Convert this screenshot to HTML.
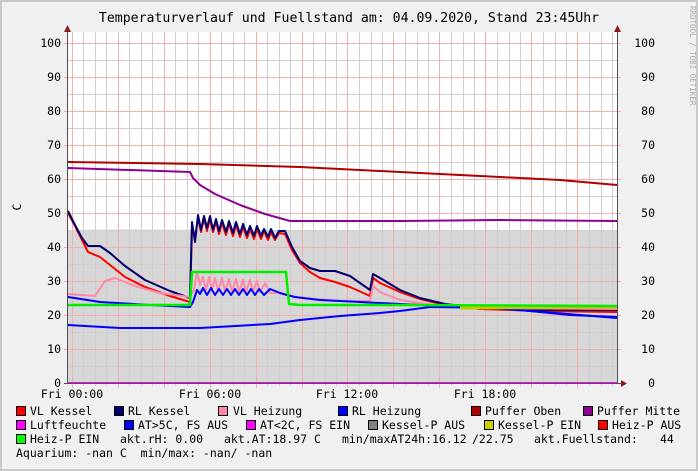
<!DOCTYPE html><html><head><style>body{margin:0;background:#f0f0f0}svg{display:block}</style></head><body>
<svg width="698" height="471" xmlns="http://www.w3.org/2000/svg" font-family="DejaVu Sans Mono, Liberation Mono, monospace">
<rect x="0" y="0" width="698" height="471" fill="#f0f0f0"/>
<rect x="1" y="1" width="696" height="469" fill="none" stroke="#c8c8c8" stroke-width="2"/>
<rect x="68" y="32" width="549" height="351" fill="#fff"/>
<!-- gray fill area -->
<path d="M68,230 L120,229.5 L200,230 L300,230 L400,230.5 L500,230 L617,231 L617,383 L68,383Z" fill="#d7d7d7"/>
<!-- grid -->
<g stroke="#cfcfcf" stroke-width="1">
<path d="M68,366.5H617M68,332.5H617M68,298.5H617M68,264.5H617M68,230.5H617M68,196.5H617M68,162.5H617M68,128.5H617M68,94.5H617M68,60.5H617"/>
<path id="vg" d="M83.5,32V386M95.5,32V386M106.5,32V386M129.5,32V386M141.5,32V386M152.5,32V386M175.5,32V386M187.5,32V386M198.5,32V386M221.5,32V386M233.5,32V386M244.5,32V386M267.5,32V386M279.5,32V386M290.5,32V386M313.5,32V386M325.5,32V386M336.5,32V386M359.5,32V386M371.5,32V386M382.5,32V386M405.5,32V386M417.5,32V386M428.5,32V386M451.5,32V386M463.5,32V386M474.5,32V386M497.5,32V386M509.5,32V386M520.5,32V386M543.5,32V386M555.5,32V386M566.5,32V386M589.5,32V386M601.5,32V386M612.5,32V386"/>
</g>
<g stroke="#f0b0b0" stroke-width="1">
<path d="M64,349.5H621M64,315.5H621M64,281.5H621M64,247.5H621M64,213.5H621M64,179.5H621M64,145.5H621M64,111.5H621M64,77.5H621M64,43.5H621"/>
<path d="M72.5,32V388M118.5,32V388M164.5,32V388M210.5,32V388M256.5,32V388M302.5,32V388M347.5,32V388M393.5,32V388M439.5,32V388M485.5,32V388M531.5,32V388M577.5,32V388"/>
</g>
<!-- series -->
<g fill="none" stroke-linejoin="round" stroke-width="2">
<path d="M68,162 L200,164 L300,167 L400,172 L500,177 L560,180 L617,185" stroke="#b00000"/>
<path d="M68,168 L190,172 L193,178 L200,185 L215,194 L240,205 L265,214 L290,221 L400,221 L500,220 L617,221" stroke="#900090"/>
<path d="M68,213 L75,226 L82,240 L88,252 L100,257 L110,265 L125,277 L145,287 L170,296 L190,302 L192,228 L195,237 L198,218 L201,232 L204,219 L207,231 L210,219 L213,232 L216,222 L219,234 L222,223 L226,235 L229,224 L233,236 L236,225 L240,237 L243,227 L247,238 L250,229 L254,239 L257,229 L261,239 L264,231 L268,240 L271,232 L275,240 L279,233 L285,234 L292,250 L300,263 L310,272 L320,278 L335,282 L350,287 L370,296 L373,278 L380,283 L400,292 L420,299 L445,305 L480,309 L540,311 L617,312" stroke="#ff0000"/>
<path d="M68,211 L75,225 L82,238 L88,246 L100,246 L110,253 L125,266 L145,280 L170,291 L190,298 L192,222 L195,242 L198,215 L201,230 L204,216 L207,228 L210,216 L213,230 L216,219 L219,231 L222,220 L226,232 L229,221 L233,233 L236,222 L240,234 L243,224 L247,235 L250,226 L254,236 L257,226 L261,236 L264,229 L268,237 L271,229 L275,238 L279,231 L285,231 L292,247 L300,261 L310,268 L320,271 L335,271 L350,276 L370,290 L373,274 L380,278 L400,290 L420,298 L445,304 L480,308 L540,310 L617,310" stroke="#000070"/>
<path d="M68,294 L95,296 L105,281 L115,278 L135,286 L160,293 L190,297 L194,290 L197,272 L200,285 L203,277 L206,290 L209,277 L212,290 L215,278 L218,291 L222,278 L225,291 L229,279 L232,292 L236,279 L239,292 L243,280 L246,292 L250,280 L253,292 L257,281 L260,292 L265,283 L270,293 L280,293 L287,295 L300,298 L340,301 L370,301 L373,286 L380,292 L400,300 L440,306 L480,308 L617,309" stroke="#ff88a8"/>
<path d="M68,297 L100,302 L150,305 L190,307 L193,302 L197,290 L200,294 L203,288 L207,295 L211,288 L215,295 L219,289 L223,295 L227,289 L231,295 L235,289 L239,295 L243,289 L247,295 L251,289 L255,295 L259,289 L264,295 L270,289 L280,293 L287,295 L295,297 L320,300 L360,302 L420,305 L480,307 L530,311 L580,315 L617,318" stroke="#0000ff"/>
<path d="M68,325 L120,328 L200,328 L270,324 L300,320 L340,316 L380,313 L400,311 L430,307 L500,308 L520,310 L570,315 L617,317" stroke="#0000ff"/>
<path d="M460,308 L617,307" stroke="#c8c800" stroke-width="3"/>
<path d="M68,305 L190,305 L192,272 L286,272 L289,304 L300,305 L400,305 L617,306" stroke="#00ee00" stroke-width="2.5"/>
<path d="M68,383 L617,383" stroke="#ff00ff"/>
</g>
<!-- axes -->
<path d="M67.5,383V30M64,383.5H621M617.5,383V30" stroke="#505050" stroke-width="1" fill="none"/>
<path d="M64,32L67.5,25L71,32Z M614,32L617.5,25L621,32Z M621,380L627,383.5L621,387Z" fill="#8b1a1a"/>
<g font-size="11.5" fill="#000">
<text x="349" y="22" font-size="13.2" text-anchor="middle">Temperaturverlauf und Fuellstand am: 04.09.2020, Stand 23:45Uhr</text>
<g text-anchor="end">
<text x="61" y="47">100</text><text x="61" y="81">90</text><text x="61" y="115">80</text><text x="61" y="149">70</text><text x="61" y="183">60</text><text x="61" y="217">50</text><text x="61" y="251">40</text><text x="61" y="285">30</text><text x="61" y="319">20</text><text x="61" y="353">10</text><text x="61" y="387">0</text>
<text x="655" y="47">100</text><text x="655" y="81">90</text><text x="655" y="115">80</text><text x="655" y="149">70</text><text x="655" y="183">60</text><text x="655" y="217">50</text><text x="655" y="251">40</text><text x="655" y="285">30</text><text x="655" y="319">20</text><text x="655" y="353">10</text><text x="655" y="387">0</text>
</g>
<text x="18" y="210" transform="rotate(-90 18 207)" text-anchor="middle">C</text>
<text x="690" y="60" font-size="7.5" fill="#aaa" transform="rotate(90 690 60)" dx="-54">RRDTOOL / TOBI OETIKER</text>
<g text-anchor="middle"><text x="72" y="398">Fri 00:00</text><text x="210" y="398">Fri 06:00</text><text x="347" y="398">Fri 12:00</text><text x="485" y="398">Fri 18:00</text></g>
<g stroke="#000" stroke-width="1">
<rect x="16.5" y="406.5" width="9" height="9" fill="#ff0000"/><rect x="114.5" y="406.5" width="9" height="9" fill="#000070"/><rect x="218.5" y="406.5" width="9" height="9" fill="#ff88a8"/><rect x="338.5" y="406.5" width="9" height="9" fill="#0000ff"/><rect x="471.5" y="406.5" width="9" height="9" fill="#b00000"/><rect x="583.5" y="406.5" width="9" height="9" fill="#900090"/>
<rect x="16.5" y="420.5" width="9" height="9" fill="#ff00ff"/><rect x="124.5" y="420.5" width="9" height="9" fill="#0000ff"/><rect x="246.5" y="420.5" width="9" height="9" fill="#ff00ff"/><rect x="368.5" y="420.5" width="9" height="9" fill="#808080"/><rect x="484.5" y="420.5" width="9" height="9" fill="#d0d000"/><rect x="598.5" y="420.5" width="9" height="9" fill="#ff0000"/>
<rect x="16.5" y="434.5" width="9" height="9" fill="#00ff00"/>
</g>
<text x="30" y="415">VL Kessel</text><text x="128" y="415">RL Kessel</text><text x="233" y="415">VL Heizung</text><text x="352" y="415">RL Heizung</text><text x="485" y="415">Puffer Oben</text><text x="597" y="415">Puffer Mitte</text>
<text x="30" y="429">Luftfeuchte</text><text x="138" y="429">AT&gt;5C, FS AUS</text><text x="260" y="429">AT&lt;2C, FS EIN</text><text x="382" y="429">Kessel-P AUS</text><text x="498" y="429">Kessel-P EIN</text><text x="612" y="429">Heiz-P AUS</text>
<text x="30" y="443">Heiz-P EIN</text><text x="120" y="443">akt.rH: 0.00</text><text x="224" y="443">akt.AT:18.97 C</text><text x="342" y="443">min/maxAT24h:16.12</text><text x="472" y="443">/22.75</text><text x="534" y="443">akt.Fuellstand:</text><text x="660" y="443">44</text>
<text x="16" y="457" xml:space="preserve">Aquarium: -nan C  min/max: -nan/ -nan</text>
</g>
</svg>
</body></html>
